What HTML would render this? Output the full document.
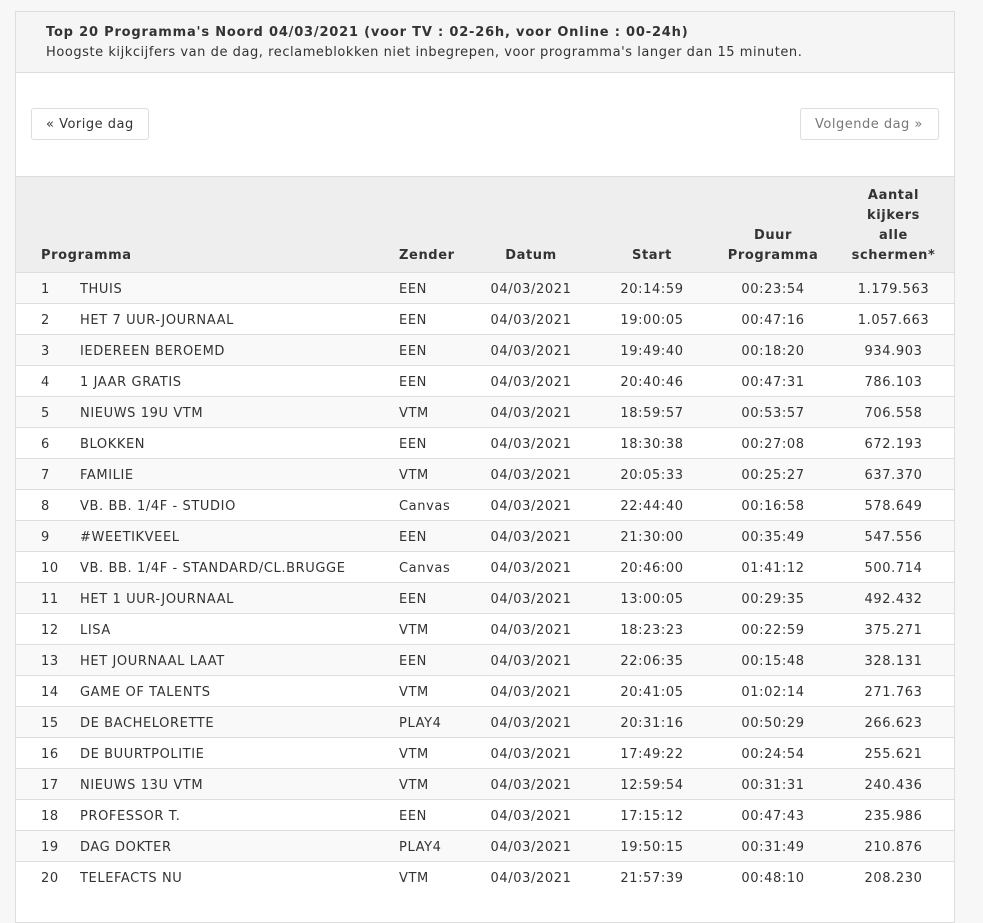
<!DOCTYPE html>
<html><head><meta charset="utf-8"><style>
body{margin:0;background:#f7f7f7;font-family:"DejaVu Sans","Liberation Sans",sans-serif;color:#333;}
.panel{position:absolute;left:15px;top:11px;width:938px;height:910px;background:#fff;border:1px solid #ddd;}
.hd{height:61px;background:#f5f5f5;border-bottom:1px solid #ddd;padding:11px 0 0 30px;box-sizing:border-box;font-size:13px;letter-spacing:0.55px;line-height:20px;}
.hd b{color:#333;letter-spacing:0.8px}
.btn{position:absolute;top:96px;height:32px;border:1px solid #ddd;border-radius:3px;font-size:13px;line-height:32px;padding:0 14px;box-sizing:border-box;letter-spacing:0.5px}
table{position:absolute;left:0;top:164px;width:938px;border-collapse:collapse;font-size:13px;letter-spacing:0.6px;table-layout:fixed}
th{background:#eee;font-weight:bold;vertical-align:bottom;padding:0 0 6px;line-height:20px;border-top:1px solid #ddd;}
td{height:30px;border-top:1px solid #ddd;padding:3px 0 0;line-height:27px;box-sizing:border-box;white-space:nowrap}
tbody tr:nth-child(odd) td{background:#f9f9f9}
.c{text-align:center}
td:first-child{padding-left:25px}
</style></head><body>
<div class="panel">
<div class="hd"><b>Top 20 Programma's Noord 04/03/2021 (voor TV : 02-26h, voor Online : 00-24h)</b><br>Hoogste kijkcijfers van de dag, reclameblokken niet inbegrepen, voor programma's langer dan 15 minuten.</div>
<div class="btn" style="left:15px;width:118px">« Vorige dag</div>
<div class="btn" style="left:784px;width:139px;color:#777">Volgende dag »</div>
<table>
<colgroup><col style="width:64px"><col style="width:319px"><col style="width:72px"><col style="width:120px"><col style="width:122px"><col style="width:120px"><col style="width:121px"></colgroup>
<thead><tr style="height:96px"><th colspan="2" style="text-align:left;padding-left:25px">Programma</th><th style="text-align:left">Zender</th><th class="c">Datum</th><th class="c">Start</th><th class="c">Duur<br>Programma</th><th class="c">Aantal<br>kijkers<br>alle<br>schermen*</th></tr></thead>
<tbody>
<tr><td>1</td><td>THUIS</td><td>EEN</td><td class="c">04/03/2021</td><td class="c">20:14:59</td><td class="c">00:23:54</td><td class="c">1.179.563</td></tr>
<tr><td>2</td><td>HET 7 UUR-JOURNAAL</td><td>EEN</td><td class="c">04/03/2021</td><td class="c">19:00:05</td><td class="c">00:47:16</td><td class="c">1.057.663</td></tr>
<tr><td>3</td><td>IEDEREEN BEROEMD</td><td>EEN</td><td class="c">04/03/2021</td><td class="c">19:49:40</td><td class="c">00:18:20</td><td class="c">934.903</td></tr>
<tr><td>4</td><td>1 JAAR GRATIS</td><td>EEN</td><td class="c">04/03/2021</td><td class="c">20:40:46</td><td class="c">00:47:31</td><td class="c">786.103</td></tr>
<tr><td>5</td><td>NIEUWS 19U VTM</td><td>VTM</td><td class="c">04/03/2021</td><td class="c">18:59:57</td><td class="c">00:53:57</td><td class="c">706.558</td></tr>
<tr><td>6</td><td>BLOKKEN</td><td>EEN</td><td class="c">04/03/2021</td><td class="c">18:30:38</td><td class="c">00:27:08</td><td class="c">672.193</td></tr>
<tr><td>7</td><td>FAMILIE</td><td>VTM</td><td class="c">04/03/2021</td><td class="c">20:05:33</td><td class="c">00:25:27</td><td class="c">637.370</td></tr>
<tr><td>8</td><td>VB. BB. 1/4F - STUDIO</td><td>Canvas</td><td class="c">04/03/2021</td><td class="c">22:44:40</td><td class="c">00:16:58</td><td class="c">578.649</td></tr>
<tr><td>9</td><td>#WEETIKVEEL</td><td>EEN</td><td class="c">04/03/2021</td><td class="c">21:30:00</td><td class="c">00:35:49</td><td class="c">547.556</td></tr>
<tr><td>10</td><td>VB. BB. 1/4F - STANDARD/CL.BRUGGE</td><td>Canvas</td><td class="c">04/03/2021</td><td class="c">20:46:00</td><td class="c">01:41:12</td><td class="c">500.714</td></tr>
<tr><td>11</td><td>HET 1 UUR-JOURNAAL</td><td>EEN</td><td class="c">04/03/2021</td><td class="c">13:00:05</td><td class="c">00:29:35</td><td class="c">492.432</td></tr>
<tr><td>12</td><td>LISA</td><td>VTM</td><td class="c">04/03/2021</td><td class="c">18:23:23</td><td class="c">00:22:59</td><td class="c">375.271</td></tr>
<tr><td>13</td><td>HET JOURNAAL LAAT</td><td>EEN</td><td class="c">04/03/2021</td><td class="c">22:06:35</td><td class="c">00:15:48</td><td class="c">328.131</td></tr>
<tr><td>14</td><td>GAME OF TALENTS</td><td>VTM</td><td class="c">04/03/2021</td><td class="c">20:41:05</td><td class="c">01:02:14</td><td class="c">271.763</td></tr>
<tr><td>15</td><td>DE BACHELORETTE</td><td>PLAY4</td><td class="c">04/03/2021</td><td class="c">20:31:16</td><td class="c">00:50:29</td><td class="c">266.623</td></tr>
<tr><td>16</td><td>DE BUURTPOLITIE</td><td>VTM</td><td class="c">04/03/2021</td><td class="c">17:49:22</td><td class="c">00:24:54</td><td class="c">255.621</td></tr>
<tr><td>17</td><td>NIEUWS 13U VTM</td><td>VTM</td><td class="c">04/03/2021</td><td class="c">12:59:54</td><td class="c">00:31:31</td><td class="c">240.436</td></tr>
<tr><td>18</td><td>PROFESSOR T.</td><td>EEN</td><td class="c">04/03/2021</td><td class="c">17:15:12</td><td class="c">00:47:43</td><td class="c">235.986</td></tr>
<tr><td>19</td><td>DAG DOKTER</td><td>PLAY4</td><td class="c">04/03/2021</td><td class="c">19:50:15</td><td class="c">00:31:49</td><td class="c">210.876</td></tr>
<tr><td>20</td><td>TELEFACTS NU</td><td>VTM</td><td class="c">04/03/2021</td><td class="c">21:57:39</td><td class="c">00:48:10</td><td class="c">208.230</td></tr>
</tbody></table>
</div>
</body></html>
